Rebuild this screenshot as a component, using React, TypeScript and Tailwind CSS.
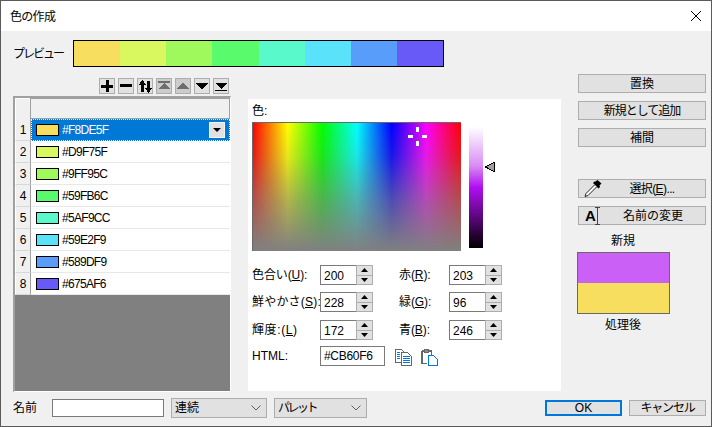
import React from "react";

const FONT = "font-['Liberation_Sans','Noto_Sans_CJK_JP',sans-serif]";
const rows = ["#F8DE5F", "#D9F75F", "#9FF95C", "#59FB6C", "#5AF9CC", "#59E2F9", "#589DF9", "#675AF6"];

function Tri({ up, bar, color }: { up?: boolean; bar?: "top" | "bottom"; color: string }) {
  return (
    <svg width="12" height="10" viewBox="0 0 12 10" shapeRendering="crispEdges">
      {bar === "top" && <rect x="0" y="0" width="12" height="1.5" fill={color} />}
      {bar === "bottom" && <rect x="0" y="8.5" width="12" height="1.5" fill={color} />}
      {up ? (
        <polygon points={bar ? "6,2 12,8 0,8" : "6,1 12,8 0,8"} fill={color} />
      ) : (
        <polygon points={bar ? "0,2 12,2 6,8" : "0,2 12,2 6,9"} fill={color} />
      )}
    </svg>
  );
}

function ToolBtn({ children, off }: { children: React.ReactNode; off?: boolean }) {
  return (
    <div className={`w-4 h-4 border border-[#adadad] flex items-center justify-center ${off ? "bg-[#cccccc]" : "bg-[#e1e1e1]"}`}>
      {children}
    </div>
  );
}

function Toolbar() {
  return (
    <div className="flex gap-[3px] ml-[86px] h-4">
      <ToolBtn>
        <svg width="12" height="12" viewBox="0 0 12 12" shapeRendering="crispEdges"><path d="M4.500 0h3v4.500H12v3H7.500V12h-3V7.500H0v-3h4.500z" fill="#000" /></svg>
      </ToolBtn>
      <ToolBtn>
        <svg width="12" height="4" viewBox="0 0 12 4" shapeRendering="crispEdges"><rect width="12" height="3" fill="#000" /></svg>
      </ToolBtn>
      <ToolBtn>
        <svg width="13" height="13" viewBox="0 0 13 13" shapeRendering="crispEdges">
          <path d="M2 5 L3.500 1 L5 0 H3 L0 4.500 H2 V12 H5 V5 Z" fill="#000" />
          <path d="M3.500 0 L7 5 H0 Z M8 1 H11 V8 H13 L9.500 13 L6 8 H8 Z" fill="#000" />
        </svg>
      </ToolBtn>
      <ToolBtn off><Tri up bar="top" color="#6d6d6d" /></ToolBtn>
      <ToolBtn off><Tri up color="#6d6d6d" /></ToolBtn>
      <ToolBtn><Tri color="#000" /></ToolBtn>
      <ToolBtn><Tri bar="bottom" color="#000" /></ToolBtn>
    </div>
  );
}

function Table() {
  return (
    <div className="mt-[2px] w-[218px] h-[296px] border-t-2 border-l-2 border-[#a0a0a0] border-r border-b border-r-white border-b-white bg-[#808080] ml-0">
      <div className="flex h-[21px] bg-[#f0f0f0]">
        <div className="w-[15px] border-t border-l border-white" />
        <div className="flex-1 border border-[#a0a0a0] border-r-[#a0a0a0]" />
      </div>
      {rows.map((c, i) => (
        <div key={c} className="flex h-[22px]">
          <div className="w-[16px] shrink-0 bg-[#f0f0f0] border-l border-white border-r border-r-[#a0a0a0] border-b border-b-[#d8d8d8] flex items-center justify-center text-[12px] text-black">
            {i + 1}
          </div>
          {i === 0 ? (
            <div className="flex-1 flex items-center bg-[#0078d7] outline-dotted outline-1 -outline-offset-1 outline-white pl-[5px] pr-[5px] text-white text-[12px]">
              <span className="w-[23px] h-[12px] border border-black shrink-0" style={{ background: c }} />
              <span className="ml-[3px] flex-1 tracking-[-0.7px]">{c}</span>
              <div className="w-4 h-4 bg-[#e1e1e1] border border-[#f4f4f4] flex items-center justify-center">
                <svg width="8" height="4" viewBox="0 0 8 4"><polygon points="0,0 8,0 4,4" fill="#000" /></svg>
              </div>
            </div>
          ) : (
            <div className="flex-1 flex items-center bg-white border-b border-[#e8e8e8] pl-[5px] text-black text-[12px]">
              <span className="w-[23px] h-[12px] border border-black shrink-0" style={{ background: c }} />
              <span className="ml-[3px] tracking-[-0.7px]">{c}</span>
            </div>
          )}
        </div>
      ))}
    </div>
  );
}

function Spin() {
  return (
    <div className="w-[17px] h-full flex flex-col border border-[#adadad] border-l-0 bg-[#e1e1e1]">
      <div className="flex-1 flex items-center justify-center border-b border-[#adadad] border-l border-l-[#adadad]">
        <svg width="7" height="4" viewBox="0 0 7 4"><polygon points="3.500,0 7,4 0,4" fill="#000" /></svg>
      </div>
      <div className="flex-1 flex items-center justify-center border-l border-[#adadad]">
        <svg width="7" height="4" viewBox="0 0 7 4"><polygon points="0,0 7,0 3.500,4" fill="#000" /></svg>
      </div>
    </div>
  );
}

function Field({ value }: { value: string }) {
  return (
    <div className="flex w-[53px] h-[20px] text-[12px]">
      <div className="w-9 h-full border border-[#7a7a7a] border-r-0 bg-white pl-[3px] leading-[20px]">{value}</div>
      <Spin />
    </div>
  );
}

function Lbl({ a, k, w, tail }: { a: string; k: string; w: string; tail?: boolean }) {
  return (
    <div className={`${w} text-[12px] whitespace-nowrap tracking-[-0.1px]`}>
      {a}(<span className="underline">{k}</span>){tail ? "" : ":"}
    </div>
  );
}

function Panel() {
  return (
    <div className="ml-[17px] mt-[25px] w-[313px] h-[292px] bg-white pl-1 text-black">
      <div className="h-[23px] pt-[5px] text-[12px] leading-[14px]">色:</div>
      <div className="flex items-start">
        <div className="relative w-[209px] h-[129px] border-t border-l border-[#696969] bg-[linear-gradient(to_right,#ff0000,#ffff00,#00ff00,#00ffff,#0000ff,#ff00ff,#ff0000)]">
          <div className="absolute inset-0 bg-[linear-gradient(to_bottom,rgba(128,128,128,0),rgba(128,128,128,0.18)_25%,rgba(128,128,128,0.6)_60%,rgba(128,128,128,1))]" />
          <svg className="absolute left-[155px] top-[4px]" width="20" height="20" viewBox="0 0 20 20" shapeRendering="crispEdges">
            <rect x="8" y="0" width="3" height="5" fill="#fff" />
            <rect x="8" y="14" width="3" height="5" fill="#fff" />
            <rect x="0" y="8" width="5" height="3" fill="#fff" />
            <rect x="14" y="8" width="5" height="3" fill="#fff" />
          </svg>
        </div>
        <div className="relative ml-2 mt-[5px] w-[14px] h-[121px] bg-[linear-gradient(to_bottom,#ffffff,#d98cf5_32%,#b00ef1_50%,#000000)]">
          <svg className="absolute left-[16px] top-[35px]" width="10" height="10" viewBox="0 0 10 10" shapeRendering="crispEdges">
            <polygon points="0.500,5 9,0.500 9,9.500" fill="#a0a0a0" stroke="#000" />
          </svg>
        </div>
      </div>
      <div className="flex items-center mt-[14px]">
        <Lbl a="色合い" k="U" w="w-[68px]" /><Field value="200" />
        <Lbl a="赤" k="R" w="w-[50px] ml-[26px]" /><Field value="203" />
      </div>
      <div className="flex items-center mt-[7px]">
        <Lbl a="鮮やかさ" k="S" w="w-[68px] tracking-[0.2px]" /><Field value="228" />
        <Lbl a="緑" k="G" w="w-[50px] ml-[26px]" /><Field value="96" />
      </div>
      <div className="flex items-center mt-2">
        <Lbl a="輝度:" k="L" tail w="w-[68px] tracking-[0.6px]" /><Field value="172" />
        <Lbl a="青" k="B" w="w-[50px] ml-[26px]" /><Field value="246" />
      </div>
      <div className="flex items-center mt-[6px]">
        <div className="w-[68px] text-[12px]">HTML:</div>
        <div className="w-[65px] h-[20px] border border-[#7a7a7a] bg-white pl-[3px] text-[12px] leading-[18px] tracking-[-0.3px]">#CB60F6</div>
        <svg className="ml-[10px]" width="17" height="20" viewBox="0 0 17 20" fill="none" shapeRendering="crispEdges">
          <path d="M0.500 3.500H6.500L9.500 6.500V16.500H0.500Z" fill="#fff" stroke="#666" />
          <path d="M6.500 6.500H12.500L16.500 10.500V19.500H6.500Z" fill="#fff" stroke="#666" />
          <path d="M2 6.500H5M2 8.500H5M2 10.500H5M2 12.500H5" stroke="#0078d7" />
          <path d="M8 10.500H15M8 12.500H15M8 14.500H15M8 16.500H15" stroke="#0078d7" />
        </svg>
        <svg className="ml-[9px]" width="17" height="20" viewBox="0 0 17 20" fill="none" shapeRendering="crispEdges">
          <path d="M1 5H10.500V9M6 17.500H1V5" stroke="#666" strokeWidth="1.500" />
          <path d="M3.500 3.500H7.500V6.500H3.500Z" fill="#8a8a8a" stroke="#666" />
          <path d="M7.500 9.500H12.500L16.500 13.500V19.500H7.500Z" fill="#fff" stroke="#0078d7" />
        </svg>
      </div>
    </div>
  );
}

function Btn({ children, mt, cls }: { children: React.ReactNode; mt: string; cls?: string }) {
  return (
    <div className={`${mt} h-[19px] border border-[#adadad] bg-[#e1e1e1] flex items-center justify-center text-[12px] text-black relative ${cls ?? ""}`}>
      {children}
    </div>
  );
}

function Right() {
  return (
    <div className="ml-[17px] w-[128px] text-black">
      <Btn mt="mt-0">置換</Btn>
      <Btn mt="mt-2" cls="tracking-[-1px]">新規として追加</Btn>
      <Btn mt="mt-2">補間</Btn>
      <Btn mt="mt-8" cls="pl-[20px] tracking-[-0.6px]">
        <svg className="absolute left-[5px] top-0" width="18" height="18" viewBox="0 0 18 18">
          <path d="M11.500 1.500 L13.500 0 L17.500 3.500 L15.500 5.500 L16 7 L14.500 8.500 L9 3 L10.500 1.500 Z" fill="#000" />
          <path d="M10.500 5 L2 13.500 L1 16.500 L4 15.500 L12.500 7" fill="#fff" stroke="#222" strokeWidth="1" />
        </svg>
        選択(<span className="underline">E</span>)...
      </Btn>
      <Btn mt="mt-2" cls="pl-[22px]">
        <span className="absolute left-[6px] top-[1px] font-bold text-[15px] leading-[15px]">A</span>
        <svg className="absolute left-[15px] top-0" width="7" height="18" viewBox="0 0 7 18" fill="none" stroke="#444" shapeRendering="crispEdges">
          <path d="M1 0.500H3.500V17.500H1M3.500 0.500H6M3.500 17.500H6" />
        </svg>
        名前の変更
      </Btn>
      <div className="mt-[8px] w-[92px] -ml-px text-center text-[12px] leading-[16px] h-[19px]">新規</div>
      <div className="-ml-px w-[93px] h-[62px] border border-[#696969] flex flex-col">
        <div className="h-[30px] bg-[#cb60f6]" />
        <div className="flex-1 bg-[#f8de5f]" />
      </div>
      <div className="-ml-px mt-[3px] w-[92px] text-center text-[12px] leading-[16px]">処理後</div>
    </div>
  );
}

function Chevron() {
  return (
    <svg width="10" height="6" viewBox="0 0 10 6" fill="none" stroke="#606060"><path d="M0.500 0.500L5 5L9.500 0.500" /></svg>
  );
}

function Select({ w, label, ml, track }: { w: string; label: string; ml: string; track?: string }) {
  return (
    <div className={`${w} ${ml} h-5 border border-[#adadad] bg-[#e1e1e1] flex items-center justify-between pl-[3px] pr-[5px] text-[12px] text-black`}>
      <span className={track}>{label}</span>
      <Chevron />
    </div>
  );
}

export default function App() {
  return (
    <div className={`w-[712px] h-[427px] bg-[#f0f0f0] border border-[#5a5a5a] flex flex-col overflow-hidden text-black ${FONT}`}>
      <div className="h-[30px] bg-white flex items-center justify-between pl-[9px] pr-[9px] text-[12px]">
        <span className="tracking-[-0.7px] pt-px">色の作成</span>
        <svg width="12" height="12" viewBox="0 0 12 12" stroke="#000" fill="none"><path d="M1 1L11 11M11 1L1 11" /></svg>
      </div>
      <div className="flex items-center mt-[9px] pl-3 h-[27px]">
        <div className="w-[60px] text-[12px] tracking-[-2px]">プレビュー</div>
        <div className="w-[371px] h-[27px] border border-black flex">
          {rows.map((c) => (
            <div key={c} className="flex-1" style={{ background: c }} />
          ))}
        </div>
      </div>
      <div className="flex mt-[7px] h-[318px] items-start">
        <div className="ml-3 pt-1">
          <Toolbar />
          <Table />
        </div>
        <Panel />
        <Right />
      </div>
      <div className="flex items-center h-5 pl-3 text-[12px] mt-[6px]">
        <div className="w-[39px]">名前</div>
        <div className="w-28 h-[18px] border border-[#7a7a7a] bg-white" />
        <Select w="w-[96px]" ml="ml-[7px]" label="連続" />
        <Select w="w-[93px]" ml="ml-[7px]" label="パレット" track="tracking-[-2.5px]" />
        <div className="ml-[178px] w-[77px] h-4 box-border border-2 border-[#0078d7] bg-[#e1e1e1] flex items-center justify-center">OK</div>
        <div className="ml-[7px] w-[77px] h-4 border border-[#adadad] bg-[#e1e1e1] flex items-center justify-center tracking-[-1.2px]">キャンセル</div>
      </div>
    </div>
  );
}
